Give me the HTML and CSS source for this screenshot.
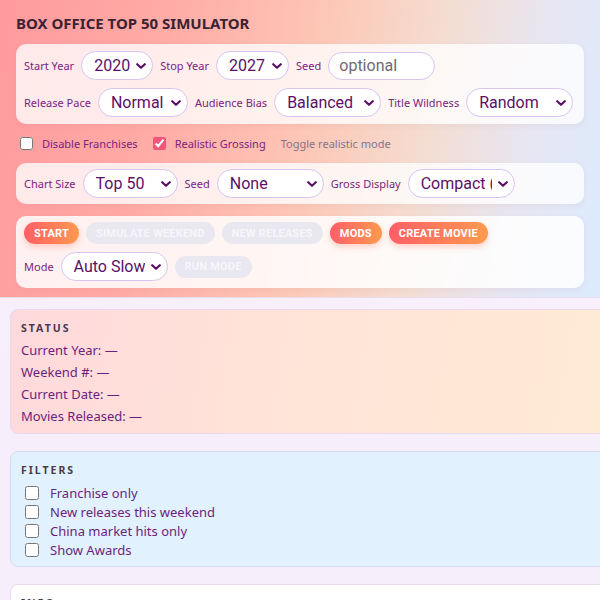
FILE: index.html
```html
<!DOCTYPE html>
<html lang="en">
<head>
<meta charset="utf-8">
<title>Box Office Top 50 Simulator</title>
<link rel="stylesheet" href="styles.css">
</head>
<body>
<header class="hero">
  <h1 class="title">BOX OFFICE TOP 50 SIMULATOR</h1>
  <div class="card">
    <div class="row">
      <label class="lbl">Start Year</label>
      <span class="selwrap w72"><select class="sel"><option>2020</option></select><svg class="chev" viewBox="0 0 10 6"><path d="M1.2 1.2 5 4.8 8.8 1.2"/></svg></span>
      <label class="lbl">Stop Year</label>
      <span class="selwrap w73"><select class="sel"><option>2027</option></select><svg class="chev" viewBox="0 0 10 6"><path d="M1.2 1.2 5 4.8 8.8 1.2"/></svg></span>
      <label class="lbl">Seed</label>
      <input class="inp" type="text" placeholder="optional">
    </div>
    <div class="row">
      <label class="lbl">Release Pace</label>
      <span class="selwrap w90"><select class="sel"><option>Normal</option></select><svg class="chev" viewBox="0 0 10 6"><path d="M1.2 1.2 5 4.8 8.8 1.2"/></svg></span>
      <label class="lbl">Audience Bias</label>
      <span class="selwrap w107"><select class="sel"><option>Balanced</option></select><svg class="chev" viewBox="0 0 10 6"><path d="M1.2 1.2 5 4.8 8.8 1.2"/></svg></span>
      <label class="lbl">Title Wildness</label>
      <span class="selwrap w107"><select class="sel"><option>Random</option></select><svg class="chev" viewBox="0 0 10 6"><path d="M1.2 1.2 5 4.8 8.8 1.2"/></svg></span>
    </div>
  </div>
  <div class="checks">
    <label class="chk"><input type="checkbox"><span>Disable Franchises</span></label>
    <label class="chk"><input type="checkbox" checked><span>Realistic Grossing</span></label>
    <span class="hint">Toggle realistic mode</span>
  </div>
  <div class="card card-chart">
    <div class="row">
      <label class="lbl">Chart Size</label>
      <span class="selwrap w95"><select class="sel"><option>Top 50</option></select><svg class="chev" viewBox="0 0 10 6"><path d="M1.2 1.2 5 4.8 8.8 1.2"/></svg></span>
      <label class="lbl">Seed</label>
      <span class="selwrap w107"><select class="sel"><option>None</option></select><svg class="chev" viewBox="0 0 10 6"><path d="M1.2 1.2 5 4.8 8.8 1.2"/></svg></span>
      <label class="lbl">Gross Display</label>
      <span class="selwrap w107"><select class="sel"><option>Compact ($1.2M)</option></select><svg class="chev" viewBox="0 0 10 6"><path d="M1.2 1.2 5 4.8 8.8 1.2"/></svg></span>
    </div>
  </div>
  <div class="card card-actions">
    <div class="row btnrow">
      <button class="btn hot">Start</button>
      <button class="btn off" disabled>Simulate Weekend</button>
      <button class="btn off" disabled>New Releases</button>
      <button class="btn hot">Mods</button>
      <button class="btn hot">Create Movie</button>
    </div>
    <div class="row">
      <label class="lbl">Mode</label>
      <span class="selwrap w107"><select class="sel"><option>Auto Slow</option></select><svg class="chev" viewBox="0 0 10 6"><path d="M1.2 1.2 5 4.8 8.8 1.2"/></svg></span>
      <button class="btn off" disabled>Run Mode</button>
    </div>
  </div>
</header>
<main class="main">
  <section class="panel status">
    <h2 class="ptitle">STATUS</h2>
    <div class="line">Current Year: —</div>
    <div class="line">Weekend #: —</div>
    <div class="line">Current Date: —</div>
    <div class="line">Movies Released: —</div>
  </section>
  <section class="panel filters">
    <h2 class="ptitle">FILTERS</h2>
    <label class="fline"><input type="checkbox"><span>Franchise only</span></label>
    <label class="fline"><input type="checkbox"><span>New releases this weekend</span></label>
    <label class="fline"><input type="checkbox"><span>China market hits only</span></label>
    <label class="fline"><input type="checkbox"><span>Show Awards</span></label>
  </section>
  <section class="panel info">
    <h2 class="ptitle">INFO</h2>
    <div class="line">Press Start to begin the simulation.</div>
  </section>
</main>
</body>
</html>
```
FILE: styles.css
```css
html, body {
  margin: 0;
  padding: 0;
  overflow: hidden;
}
body {
  font-family: "Noto Sans", "Open Sans", sans-serif;
  background: linear-gradient(180deg, #fdfbff 0%, #f6eefb 60%, #f7eefb 100%);
  width: 600px;
  height: 600px;
}
.hero {
  padding: 13px 16px 9px;
  background: linear-gradient(100deg, #ff9a9e 0%, #ffaaa5 25%, #fdc6b5 50%, #f5dccf 68%, #e7e6f2 85%, #dbebfd 100%);
  border-bottom: 1px solid #e9dcef;
}
.title {
  margin: 0 0 11px;
  font-size: 15px;
  line-height: 20px;
  font-weight: 700;
  color: #3b2233;
  letter-spacing: 0;
}
.card {
  background: rgba(255, 255, 255, 0.78);
  border-radius: 10px;
  padding: 7px 8px;
  display: flex;
  flex-direction: column;
  gap: 8px;
  box-shadow: 0 2px 6px rgba(180, 100, 120, 0.08);
}
.card + .card {
  margin-top: 12px;
}
.card-chart {
  padding: 6px 8px;
}
.card-actions {
  padding: 6px 8px 7px;
  background: rgba(255, 255, 255, 0.85);
}
.row {
  display: flex;
  align-items: center;
  gap: 6px;
}
.lbl {
  font-size: 11px;
  color: #7a2380;
  white-space: nowrap;
  flex-shrink: 0;
  margin-right: 1px;
}
.selwrap {
  position: relative;
  display: inline-block;
  height: 29px;
  flex-shrink: 0;
  margin-right: 1px;
}
.sel {
  appearance: none;
  -webkit-appearance: none;
  width: 100%;
  height: 29px;
  box-sizing: border-box;
  border: 1px solid #d6c5ee;
  border-radius: 15px;
  background: #fff;
  color: #5c0f66;
  font-family: Roboto, "Noto Sans", sans-serif;
  font-size: 16px;
  padding: 0 22px 0 12px;
  outline: none;
}
.chev {
  position: absolute;
  right: 7px;
  top: 12px;
  width: 10px;
  height: 6px;
  pointer-events: none;
}
.chev path {
  fill: none;
  stroke: #5c0f66;
  stroke-width: 2.2;
  stroke-linecap: round;
  stroke-linejoin: round;
}
.w72 { width: 72px; }
.w73 { width: 73px; }
.w90 { width: 90px; }
.w95 { width: 95px; }
.w107 { width: 107px; }
.inp {
  width: 107px;
  height: 28px;
  box-sizing: border-box;
  border: 1px solid #d6c5ee;
  border-radius: 14px;
  background: #fff;
  font-family: Roboto, "Noto Sans", sans-serif;
  font-size: 16px;
  padding: 0 10px;
  color: #5c0f66;
  outline: none;
}
.inp::placeholder {
  color: #6f6a72;
}
.checks {
  display: flex;
  align-items: center;
  gap: 15px;
  margin: 10px 4px;
  height: 19px;
}
.chk {
  display: flex;
  align-items: center;
  gap: 9px;
  font-size: 11px;
  color: #7a2380;
}
.chk input, .fline input {
  margin: 0;
  width: 13px;
  height: 13px;
  accent-color: #f2577a;
}
.hint {
  font-size: 11px;
  color: #86758a;
}
.btnrow {
  gap: 7px;
}
.btn {
  height: 22px;
  border: 0;
  border-radius: 11px;
  padding: 0 10px;
  font-family: Roboto, "Noto Sans", sans-serif;
  font-weight: 700;
  font-size: 11px;
  text-transform: uppercase;
  letter-spacing: 0.2px;
  color: #fff;
  flex-shrink: 0;
}
.hot {
  background: linear-gradient(90deg, #ff5e67 0%, #ff9a4f 100%);
  box-shadow: 0 3px 6px rgba(255, 120, 90, 0.3);
}
.off {
  background: #e9e7ef;
  color: #f7f6fa;
}
.main {
  padding: 11px 0 0 10px;
  width: 640px;
  display: flex;
  flex-direction: column;
  gap: 17px;
}
.panel {
  border: 1px solid #ead8ee;
  border-radius: 8px;
  padding: 10px 10px 6px;
}
.status {
  background: linear-gradient(100deg, #ffd9dc 0%, #ffe3d8 40%, #ffecd4 100%);
}
.filters {
  background: #e1f1fe;
  border-color: #d7dcf3;
  padding-bottom: 7px;
}
.info {
  background: #fff;
}
.ptitle {
  margin: 0 0 3px;
  font-size: 10.5px;
  line-height: 16px;
  font-weight: 700;
  letter-spacing: 2px;
  color: #4a3a4d;
}
.line {
  font-size: 13px;
  line-height: 22px;
  color: #6c1f7d;
}
.filters .ptitle {
  margin-bottom: 5px;
}
.fline {
  display: flex;
  align-items: center;
  gap: 11px;
  height: 19px;
  padding-left: 4px;
  font-size: 13px;
  color: #6c1f7d;
}
.fline input {
  width: 14px;
  height: 14px;
}
```
